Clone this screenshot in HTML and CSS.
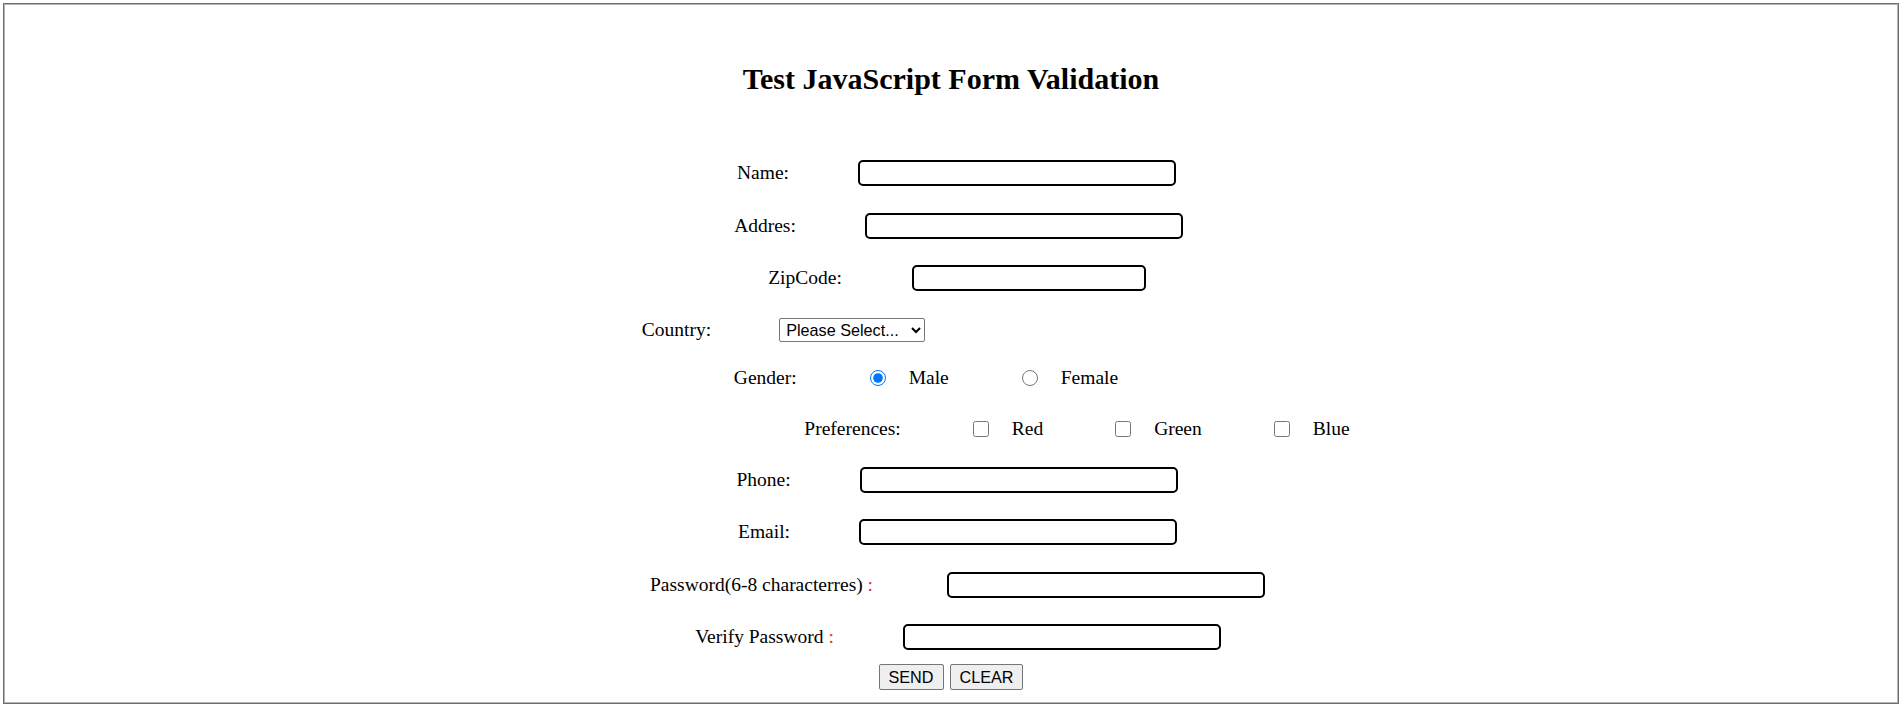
FILE: index.html
```html
<!DOCTYPE html>
<html>
<head>
<meta charset="utf-8">
<title>Test JavaScript Form Validation</title>
<link rel="stylesheet" href="styles.css">
</head>
<body>
<div class="frame">
  <h2 class="title">Test JavaScript Form Validation</h2>
  <form class="form">
    <div class="row r-name"><label class="lbl">Name:</label><input class="field" type="text"></div>
    <div class="row r-addr"><label class="lbl">Addres:</label><input class="field" type="text"></div>
    <div class="row r-zip"><label class="lbl">ZipCode:</label><input class="field field-zip" type="text"></div>
    <div class="row r-country"><label class="lbl">Country:</label>
      <select class="sel"><option>Please Select...</option><option>USA</option><option>France</option></select>
    </div>
    <div class="row r-gender"><label class="lbl">Gender:</label>
      <input class="radio" type="radio" name="g" checked><span class="opt">Male</span>
      <input class="radio" type="radio" name="g"><span class="opt">Female</span>
    </div>
    <div class="row r-pref"><label class="lbl">Preferences:</label>
      <input class="check" type="checkbox"><span class="opt">Red</span>
      <input class="check" type="checkbox"><span class="opt">Green</span>
      <input class="check" type="checkbox"><span class="opt">Blue</span>
    </div>
    <div class="row r-phone"><label class="lbl">Phone:</label><input class="field" type="text"></div>
    <div class="row r-email"><label class="lbl">Email:</label><input class="field" type="text"></div>
    <div class="row r-pwd"><label class="lbl">Password(6-8 characterres) <span class="req">:</span></label><input class="field field-pwd" type="password"></div>
    <div class="row r-verify"><label class="lbl">Verify Password <span class="req">:</span></label><input class="field" type="password"></div>
    <div class="row r-btns"><button class="btn" type="button">SEND</button><button class="btn" type="reset">CLEAR</button></div>
  </form>
</div>
</body>
</html>
```
FILE: styles.css
```css
html, body {
  margin: 0;
  padding: 0;
  background: #fff;
}
body {
  font-family: "Liberation Serif", "Times New Roman", serif;
  font-size: 19.5px;
  color: #000;
}
.frame {
  margin: 3px 3px 0 3px;
  height: 701px;
  box-sizing: border-box;
  border: 1px solid #6e6e6e;
  box-shadow: inset 0 0 0 1px #b4b4b4;
  padding-top: 58px;
}
.title {
  margin: 0;
  text-align: center;
  font-size: 30px;
  line-height: 34px;
  font-weight: bold;
}
.form {
  margin: 64px 0 0 0;
  display: flex;
  flex-direction: column;
}
.row {
  display: flex;
  justify-content: center;
  align-items: center;
  height: 26px;
  margin-top: 26.5px;
}
.row.r-name { margin-top: 0; }
.lbl {
  white-space: nowrap;
  line-height: 22px;
}
.req { color: #e8303c; }
.field {
  width: 318px;
  height: 26px;
  box-sizing: border-box;
  border: 2px solid #000;
  border-radius: 5px;
  background: #fff;
  padding: 0 4px;
  margin: 0 0 0 69px;
  font-size: 16px;
  outline: none;
}
.field-zip { width: 234px; margin-left: 70px; }
.field-pwd { margin-left: 74px; }

.sel {
  width: 146px;
  height: 24px;
  margin: 0 0 0 68px;
  font-family: "Liberation Sans", Arial, sans-serif;
  font-size: 16.2px;
  color: #000;
  border: 1px solid #767676;
  border-radius: 2px;
  background: #fff;
  padding: 0 2px;
}
.radio, .check {
  width: 16px;
  height: 16px;
  margin: 0 0 0 72px;
  flex: none;
}
.r-gender .radio { margin-left: 73px; }
.opt {
  margin-left: 23px;
  white-space: nowrap;
}
.btn {
  height: 26px;
  margin: 0;
  padding: 0 9px;
  font-family: "Liberation Sans", Arial, sans-serif;
  font-size: 16.2px;
  color: #000;
  background: #efefef;
  border: 1px solid #767676;
  border-radius: 2px;
}
.btn + .btn { margin-left: 6px; }

/* per-row horizontal balance (rows are centred, with uneven trailing space) */
.r-name { padding-left: 11px; }
.r-addr { padding-left: 15px; }
.r-zip { padding-left: 12px; }
.r-country { padding-right: 335px; margin-top: 25.5px; }
.r-gender { padding-right: 50px; margin-top: 22px; }
.r-pref { padding-left: 252px; margin-top: 25px; }
.r-phone { padding-left: 12px; margin-top: 25px; }
.r-email { padding-left: 13px; }
.r-pwd { padding-left: 13px; }
.r-verify { padding-left: 14px; }
.r-btns { margin-top: 14px; }
```
